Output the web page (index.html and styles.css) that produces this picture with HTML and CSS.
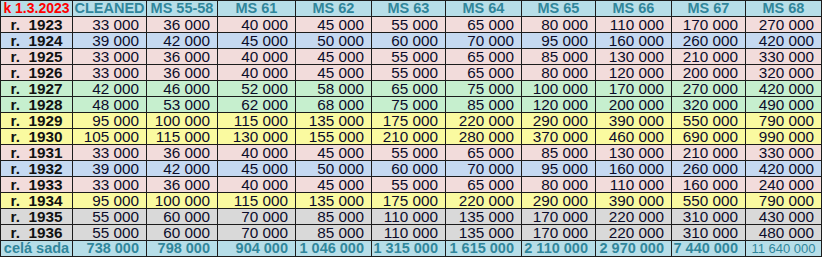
FILE: index.html
```html
<!DOCTYPE html>
<html>
<head>
<meta charset="utf-8">
<link rel="stylesheet" href="styles.css">
</head>
<body>
<table class="prices">
<colgroup>
<col class="c0"><col class="c1"><col class="c2"><col class="c3"><col class="c4"><col class="c5"><col class="c6"><col class="c7"><col class="c8"><col class="c9"><col class="c10">
</colgroup>
<thead>
<tr class="head">
<th class="date">k 1.3.2023</th><th>CLEANED</th><th>MS 55-58</th><th>MS 61</th><th>MS 62</th><th>MS 63</th><th>MS 64</th><th>MS 65</th><th>MS 66</th><th>MS 67</th><th>MS 68</th>
</tr>
</thead>
<tbody>
<tr class="pink"><th>r.&nbsp;&nbsp;1923</th><td>33 000</td><td>36 000</td><td>40 000</td><td>45 000</td><td>55 000</td><td>65 000</td><td>80 000</td><td>110 000</td><td>170 000</td><td>270 000</td></tr>
<tr class="blue"><th>r.&nbsp;&nbsp;1924</th><td>39 000</td><td>42 000</td><td>45 000</td><td>50 000</td><td>60 000</td><td>70 000</td><td>95 000</td><td>160 000</td><td>260 000</td><td>420 000</td></tr>
<tr class="pink"><th>r.&nbsp;&nbsp;1925</th><td>33 000</td><td>36 000</td><td>40 000</td><td>45 000</td><td>55 000</td><td>65 000</td><td>85 000</td><td>130 000</td><td>210 000</td><td>330 000</td></tr>
<tr class="pink"><th>r.&nbsp;&nbsp;1926</th><td>33 000</td><td>36 000</td><td>40 000</td><td>45 000</td><td>55 000</td><td>65 000</td><td>80 000</td><td>120 000</td><td>200 000</td><td>320 000</td></tr>
<tr class="green"><th>r.&nbsp;&nbsp;1927</th><td>42 000</td><td>46 000</td><td>52 000</td><td>58 000</td><td>65 000</td><td>75 000</td><td>100 000</td><td>170 000</td><td>270 000</td><td>420 000</td></tr>
<tr class="green"><th>r.&nbsp;&nbsp;1928</th><td>48 000</td><td>53 000</td><td>62 000</td><td>68 000</td><td>75 000</td><td>85 000</td><td>120 000</td><td>200 000</td><td>320 000</td><td>490 000</td></tr>
<tr class="yellow"><th>r.&nbsp;&nbsp;1929</th><td>95 000</td><td>100 000</td><td>115 000</td><td>135 000</td><td>175 000</td><td>220 000</td><td>290 000</td><td>390 000</td><td>550 000</td><td>790 000</td></tr>
<tr class="yellow"><th>r.&nbsp;&nbsp;1930</th><td>105 000</td><td>115 000</td><td>130 000</td><td>155 000</td><td>210 000</td><td>280 000</td><td>370 000</td><td>460 000</td><td>690 000</td><td>990 000</td></tr>
<tr class="pink"><th>r.&nbsp;&nbsp;1931</th><td>33 000</td><td>36 000</td><td>40 000</td><td>45 000</td><td>55 000</td><td>65 000</td><td>85 000</td><td>130 000</td><td>210 000</td><td>330 000</td></tr>
<tr class="blue"><th>r.&nbsp;&nbsp;1932</th><td>39 000</td><td>42 000</td><td>45 000</td><td>50 000</td><td>60 000</td><td>70 000</td><td>95 000</td><td>160 000</td><td>260 000</td><td>420 000</td></tr>
<tr class="pink"><th>r.&nbsp;&nbsp;1933</th><td>33 000</td><td>36 000</td><td>40 000</td><td>45 000</td><td>55 000</td><td>65 000</td><td>80 000</td><td>110 000</td><td>160 000</td><td>240 000</td></tr>
<tr class="yellow"><th>r.&nbsp;&nbsp;1934</th><td>95 000</td><td>100 000</td><td>115 000</td><td>135 000</td><td>175 000</td><td>220 000</td><td>290 000</td><td>390 000</td><td>550 000</td><td>790 000</td></tr>
<tr class="grey"><th>r.&nbsp;&nbsp;1935</th><td>55 000</td><td>60 000</td><td>70 000</td><td>85 000</td><td>110 000</td><td>135 000</td><td>170 000</td><td>220 000</td><td>310 000</td><td>430 000</td></tr>
<tr class="grey"><th>r.&nbsp;&nbsp;1936</th><td>55 000</td><td>60 000</td><td>70 000</td><td>85 000</td><td>110 000</td><td>135 000</td><td>170 000</td><td>220 000</td><td>310 000</td><td>480 000</td></tr>
</tbody>
<tfoot>
<tr class="foot"><th>celá sada</th><td>738 000</td><td>798 000</td><td>904 000</td><td>1 046 000</td><td>1 315 000</td><td>1 615 000</td><td>2 110 000</td><td>2 970 000</td><td>7 440 000</td><td class="small">11 640 000</td></tr>
</tfoot>
</table>
</body>
</html>
```
FILE: styles.css
```css
html, body {
  margin: 0;
  padding: 0;
  background: #ffffff;
}

.prices {
  border-collapse: collapse;
  table-layout: fixed;
  width: 821px;
  font-family: "Liberation Sans", Arial, sans-serif;
}

.c0 { width: 72px; }
.c1 { width: 74px; }
.c2 { width: 71px; }
.c3 { width: 78px; }
.c4 { width: 76px; }
.c5 { width: 74px; }
.c6 { width: 76px; }
.c7 { width: 74px; }
.c8 { width: 76px; }
.c9 { width: 74px; }
.c10 { width: 76px; }

.prices tr {
  height: 16px;
}

.prices th,
.prices td {
  border: 1px solid #1c1c1c;
  padding: 0 7px 0 0;
  height: 15px;
  line-height: 15px;
  white-space: nowrap;
  overflow: hidden;
}

.prices td {
  text-align: right;
  font-size: 15.3px;
  color: #0c0c2a;
}

.prices tbody th {
  text-align: center;
  padding: 0;
  font-size: 15.3px;
  font-weight: bold;
  color: #111111;
}

.head th {
  background: #b7dee8;
  color: #31869b;
  font-size: 14.5px;
  font-weight: bold;
  text-align: center;
  padding: 0;
}

.head th.date {
  color: #ff0000;
  font-size: 14px;
}

.foot th,
.foot td {
  background: #b7dee8;
  color: #31869b;
  font-weight: bold;
  font-size: 14.5px;
}

.foot th {
  padding: 0;
  text-align: center;
}

.foot td.small {
  font-weight: normal;
  font-size: 13px;
  text-align: center;
  padding: 0;
}

.pink th, .pink td { background: #f2dcdb; }
.blue th, .blue td { background: #c5d9f1; }
.green th, .green td { background: #c6efce; }
.yellow th, .yellow td { background: #fafaa0; }
.grey th, .grey td { background: #d9d9d9; }
```
